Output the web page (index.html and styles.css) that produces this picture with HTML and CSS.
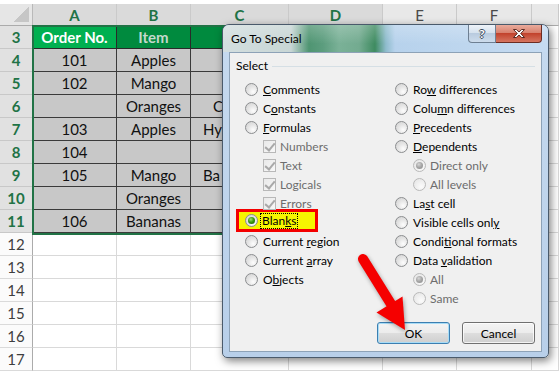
FILE: index.html
```html
<!DOCTYPE html>
<html>
<head>
    <meta charset="utf-8">
    <title>Go To Special</title>
    <link rel="stylesheet" href="styles.css">
</head>
<body>
    <div class="screen">
        <div class="sheet">
            <div class="corner"></div>
            <div class="ch on">A</div><div class="ch on">B</div><div class="ch on">C</div><div class="ch on">D</div><div class="ch">E</div><div class="ch">F</div><div class="ch"></div>

            <div class="rh on">3</div><div class="c g1">Order No.</div><div class="c g2">Item</div><div class="c g2"></div><div class="c g2"></div><div class="c"></div><div class="c"></div><div class="c"></div>
            <div class="rh on">4</div><div class="c t">101</div><div class="c t">Apples</div><div class="c t"></div><div class="c t"></div><div class="c"></div><div class="c"></div><div class="c"></div>
            <div class="rh on">5</div><div class="c t">102</div><div class="c t">Mango</div><div class="c t"></div><div class="c t"></div><div class="c"></div><div class="c"></div><div class="c"></div>
            <div class="rh on">6</div><div class="c t"></div><div class="c t">Oranges</div><div class="c t cut short"><span>C</span></div><div class="c t"></div><div class="c"></div><div class="c"></div><div class="c"></div>
            <div class="rh on">7</div><div class="c t">103</div><div class="c t">Apples</div><div class="c t cut"><span>Hy</span></div><div class="c t"></div><div class="c"></div><div class="c"></div><div class="c"></div>
            <div class="rh on">8</div><div class="c t">104</div><div class="c t"></div><div class="c t"></div><div class="c t"></div><div class="c"></div><div class="c"></div><div class="c"></div>
            <div class="rh on">9</div><div class="c t">105</div><div class="c t">Mango</div><div class="c t cut"><span>Ba</span></div><div class="c t"></div><div class="c"></div><div class="c"></div><div class="c"></div>
            <div class="rh on">10</div><div class="c t"></div><div class="c t">Oranges</div><div class="c t"></div><div class="c t"></div><div class="c"></div><div class="c"></div><div class="c"></div>
            <div class="rh on">11</div><div class="c t">106</div><div class="c t">Bananas</div><div class="c t"></div><div class="c t"></div><div class="c"></div><div class="c"></div><div class="c"></div>

            <div class="rh">12</div><div class="c"></div><div class="c"></div><div class="c"></div><div class="c"></div><div class="c"></div><div class="c"></div><div class="c"></div>
            <div class="rh">13</div><div class="c"></div><div class="c"></div><div class="c"></div><div class="c"></div><div class="c"></div><div class="c"></div><div class="c"></div>
            <div class="rh">14</div><div class="c"></div><div class="c"></div><div class="c"></div><div class="c"></div><div class="c"></div><div class="c"></div><div class="c"></div>
            <div class="rh">15</div><div class="c"></div><div class="c"></div><div class="c"></div><div class="c"></div><div class="c"></div><div class="c"></div><div class="c"></div>
            <div class="rh">16</div><div class="c"></div><div class="c"></div><div class="c"></div><div class="c"></div><div class="c"></div><div class="c"></div><div class="c"></div>
            <div class="rh">17</div><div class="c"></div><div class="c"></div><div class="c"></div><div class="c"></div><div class="c"></div><div class="c"></div><div class="c"></div>
        </div>

        <!-- selected range A3:D11 -->
        <div class="selection"></div>

        <div class="dialog">
            <div class="titlebar">
                <span class="title">Go To Special</span>
                <div class="caps">
                    <span class="cap-help">?</span>
                    <span class="cap-close">
                        <svg width="12" height="9" viewBox="0 0 12 9">
                            <polygon points="0.5,0.5 3.3,0.5 6,3 8.7,0.5 11.5,0.5 7.7,4.5 11.5,8.5 8.7,8.5 6,6 3.3,8.5 0.5,8.5 4.3,4.5" fill="#fff" stroke="#4b1d15" stroke-width="0.9"/>
                        </svg>
                    </span>
                </div>
            </div>
            <div class="client">
                <div class="legend">Select</div>
                <div class="opts">
                    <div class="col">
                        <div class="opt"><span class="rb"></span><span><u>C</u>omments</span></div>
                        <div class="opt"><span class="rb"></span><span>C<u>o</u>nstants</span></div>
                        <div class="opt"><span class="rb"></span><span><u>F</u>ormulas</span></div>
                        <div class="opt sub off"><span class="cb"></span><span>Numbers</span></div>
                        <div class="opt sub off"><span class="cb"></span><span>Text</span></div>
                        <div class="opt sub off"><span class="cb"></span><span>Logicals</span></div>
                        <div class="opt sub off"><span class="cb"></span><span>Errors</span></div>
                        <div class="opt mark"><span class="rb on"></span><span class="focus">Blan<u>k</u>s</span></div>
                        <div class="opt"><span class="rb"></span><span>Current <u>r</u>egion</span></div>
                        <div class="opt"><span class="rb"></span><span>Current <u>a</u>rray</span></div>
                        <div class="opt"><span class="rb"></span><span>O<u>b</u>jects</span></div>
                    </div>
                    <div class="col">
                        <div class="opt"><span class="rb"></span><span>Ro<u>w</u> differences</span></div>
                        <div class="opt"><span class="rb"></span><span>Colu<u>m</u>n differences</span></div>
                        <div class="opt"><span class="rb"></span><span><u>P</u>recedents</span></div>
                        <div class="opt"><span class="rb"></span><span><u>D</u>ependents</span></div>
                        <div class="opt sub off"><span class="rb on"></span><span>Direct only</span></div>
                        <div class="opt sub off"><span class="rb"></span><span>All levels</span></div>
                        <div class="opt"><span class="rb"></span><span>La<u>s</u>t cell</span></div>
                        <div class="opt"><span class="rb"></span><span>Visible cells onl<u>y</u></span></div>
                        <div class="opt"><span class="rb"></span><span>Condi<u>t</u>ional formats</span></div>
                        <div class="opt"><span class="rb"></span><span>Data <u>v</u>alidation</span></div>
                        <div class="opt sub off"><span class="rb on"></span><span>All</span></div>
                        <div class="opt sub off"><span class="rb"></span><span>Same</span></div>
                    </div>
                </div>
                <div class="buttons">
                    <button class="btn def">OK</button>
                    <button class="btn">Cancel</button>
                </div>
            </div>
        </div>

        <svg class="arrow" width="559" height="372" viewBox="0 0 559 372">
            <line x1="363" y1="259" x2="391" y2="304" stroke="#f50000" stroke-width="10" stroke-linecap="round"/>
            <polygon points="376.5,312.5 402.5,296.5 405,330" fill="#f50000"/>
        </svg>
    </div>
</body>
</html>
```

FILE: styles.css
```css
* {
    box-sizing: border-box;
}
body {
    margin: 0;
    font-family: 'Lato', 'Liberation Sans', sans-serif;
    background: #fff;
}
.screen {
    position: relative;
    width: 559px;
    height: 372px;
    overflow: hidden;
}

/* worksheet */
.sheet {
    display: grid;
    grid-template-columns: 33px 84px 74px 98px 94px 74px 75px 27px;
    grid-template-rows: 22px repeat(15, 23px);
    padding-top: 4px;
    font-size: 15px;
}
.sheet > div {
    display: flex;
    align-items: center;
    justify-content: center;
    white-space: nowrap;
    overflow: hidden;
}
.sheet > .corner {
    justify-content: flex-end;
    align-items: flex-end;
    padding: 0 3px 3px 0;
    background: #e6e6e6;
    border-right: 1px solid #b9b9b9;
    border-bottom: 1px solid #ababab;
}
.corner::after {
    content: "";
    width: 15px;
    height: 15px;
    background: linear-gradient(135deg, transparent 50%, #c6c6c6 50%);
}
.ch {
    background: #e8e8e8;
    border-right: 1px solid #cacaca;
    border-bottom: 1px solid #ababab;
    color: #4a4a4a;
}
.ch.on {
    background: #dadada;
    color: #217346;
    font-weight: 700;
}
.rh {
    background: #fbfbfb;
    border-right: 1px solid #ababab;
    border-bottom: 1px solid #dadada;
    color: #3e3e3e;
}
.rh.on {
    background: #e1e1e1;
    border-bottom-color: #c8c8c8;
    color: #217346;
    font-weight: 700;
}
.c {
    border-right: 1px solid #d9d9d9;
    border-bottom: 1px solid #d9d9d9;
    color: #111;
}
.c.t {
    background: #c8c8c8;
    border-color: #3a3a3a;
}
/* text in column C that runs under the dialog */
.sheet > .cut {
    justify-content: flex-start;
    padding-left: 12px;
}
.sheet > .cut.short {
    padding-left: 22px;
}
.c.g1 {
    background: #00b050;
    border-color: #2a2a2a;
    color: #fff;
    font-weight: 700;
}
.c.g2 {
    background: #008a3e;
    border-color: #2a2a2a;
    color: #c4d8cc;
    font-weight: 700;
}
.selection {
    position: absolute;
    left: 32px;
    top: 25px;
    width: 352px;
    height: 210px;
    border: 2px solid #217346;
}

/* dialog window */
.dialog {
    position: absolute;
    left: 222px;
    top: 24px;
    width: 327px;
    height: 334px;
    display: flex;
    flex-direction: column;
    border: 1px solid #4a5a6b;
    border-radius: 7px 7px 5px 5px;
    background: linear-gradient(180deg, #c6daef, #b8cfe9);
    box-shadow: 2px 3px 8px rgba(0, 0, 0, 0.5);
    font-size: 12px;
    color: #000;
}
.titlebar {
    flex: none;
    height: 27px;
    display: flex;
    align-items: center;
    padding-left: 8px;
    border-radius: 6px 6px 0 0;
    background:
        linear-gradient(180deg, rgba(255, 255, 255, 0.22), rgba(255, 255, 255, 0) 70%),
        linear-gradient(90deg, #d3dedf 0, #c8d6d5 68px, #4f9572 86px, #5c9d7e 100px, #7ab197 116px, #73ab90 136px, #3e8b60 152px, #8fbccd 163px, #b7d2ec 172px, #c6dbf1 100%);
}
.title {
    flex: 1;
}
.caps {
    align-self: flex-start;
    display: flex;
    margin-right: 6px;
}
.cap-help {
    width: 28px;
    height: 18px;
    display: flex;
    align-items: center;
    justify-content: center;
    border: 1px solid #6e7f92;
    border-top: none;
    border-radius: 0 0 0 4px;
    background: linear-gradient(180deg, #eef3f9, #d6e2ee 45%, #b9cbdf 50%, #cddcec);
    color: #fff;
    font-size: 12px;
    font-weight: 700;
    text-shadow: 1px 0 #3d4c5c, -1px 0 #3d4c5c, 0 1px #3d4c5c, 0 -1px #3d4c5c;
}
.cap-close {
    width: 46px;
    height: 18px;
    display: flex;
    align-items: center;
    justify-content: center;
    border: 1px solid #6c2c22;
    border-top: none;
    border-left: none;
    border-radius: 0 0 4px 0;
    background: linear-gradient(180deg, #e9ab9c, #d8826f 45%, #c2432d 50%, #d67560);
}
.client {
    flex: 1;
    display: flex;
    flex-direction: column;
    margin: 0 6px 5px;
    padding: 6px 6px 7px;
    border: 1px solid #8da2b7;
    background: #f0f0f0;
}
.legend {
    display: flex;
    align-items: center;
    gap: 4px;
    height: 14px;
    line-height: 14px;
}
.legend::after {
    content: "";
    flex: 1;
    height: 1px;
    background: #d5dfe5;
}
.opts {
    display: grid;
    grid-template-columns: 150px 1fr;
    margin: 7px 0 0 9px;
}
.col {
    display: flex;
    flex-direction: column;
}
.opt {
    display: flex;
    align-items: center;
    gap: 5px;
    height: 19px;
    white-space: nowrap;
}
.opt.sub {
    padding-left: 18px;
    gap: 4px;
}
.opt.off {
    color: #6d6d6d;
}
.opt.mark {
    width: 82px;
    height: 23px;
    margin: -4px 0 0 -9px;
    padding-left: 6px;
    border: 3px solid #f40000;
    background: #f6f600;
}
.focus {
    margin-left: -3px;
    padding: 0 1px;
    line-height: 14px;
    border: 1px dotted #000;
}

/* radio and check boxes */
.rb {
    position: relative;
    flex: none;
    width: 13px;
    height: 13px;
    border-radius: 50%;
    border: 1px solid #8b8d8f;
    background: radial-gradient(circle at 65% 70%, #fdfdfd 0, #e6e6e6 45%, #cfcfcf 100%);
}
.rb.on::after {
    content: "";
    position: absolute;
    left: 2px;
    top: 2px;
    width: 7px;
    height: 7px;
    border-radius: 50%;
    background: radial-gradient(circle at 40% 35%, #9ce276 0, #3b9a12 45%, #1b5a04 100%);
}
.off .rb {
    border-color: #b9b9b9;
    background: radial-gradient(circle at 65% 70%, #fbfbfb 0, #efefef 50%, #e2e2e2 100%);
}
.off .rb.on::after {
    background: radial-gradient(circle at 40% 35%, #d6d6d6 0, #a4a4a4 50%, #8a8a8a 100%);
}
.cb {
    position: relative;
    flex: none;
    width: 13px;
    height: 13px;
    border: 1px solid #b8b8b8;
    background: linear-gradient(135deg, #e9e9e9, #f8f8f8);
}
.cb::after {
    content: "";
    position: absolute;
    left: 3px;
    top: 0;
    width: 4px;
    height: 8px;
    border: solid #a9a9a9;
    border-width: 0 2px 2px 0;
    transform: rotate(40deg);
}

/* buttons */
.buttons {
    display: flex;
    justify-content: flex-end;
    gap: 12px;
    margin-top: auto;
}
.btn {
    width: 73px;
    height: 22px;
    padding: 0;
    border: 1px solid #707070;
    border-radius: 3px;
    background: linear-gradient(180deg, #f4f4f4 0, #ececec 48%, #dddddd 52%, #cfcfcf 100%);
    box-shadow: inset 0 0 0 1px rgba(255, 255, 255, 0.75);
    font: inherit;
    color: #000;
}
.btn.def {
    border-color: #3c7fb1;
    box-shadow: inset 0 0 0 1px #a8dcf6;
}

/* annotation arrow */
.arrow {
    position: absolute;
    left: 0;
    top: 0;
    pointer-events: none;
    filter: drop-shadow(1px 2px 2px rgba(0, 0, 0, 0.35));
}
```
